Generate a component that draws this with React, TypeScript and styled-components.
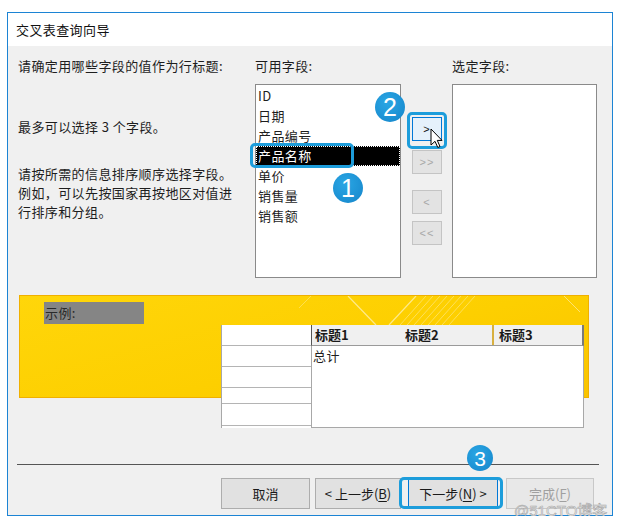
import React from 'react';
import styled, { createGlobalStyle } from 'styled-components';

const GlobalStyle = createGlobalStyle`
  html, body {
    margin: 0;
    padding: 0;
    background: #fff;
  }
  body {
    font-family: "Noto Sans CJK SC", "Microsoft YaHei", sans-serif;
    font-size: 13px;
    letter-spacing: 0.4px;
    color: #1e1e1e;
  }
`;

const fields = ['ID', '日期', '产品编号', '产品名称', '单价', '销售量', '销售额'];

const App = () => {
    return (
        <Page>
            <GlobalStyle />
            <Window>
                <TitleBar>交叉表查询向导</TitleBar>
                <Body>
                    <Upper>
                        <LeftCol>
                            <Line>请确定用哪些字段的值作为行标题:</Line>
                            <Line $mt={42}>最多可以选择 3 个字段。</Line>
                            <Line $mt={28}>
                                请按所需的信息排序顺序选择字段。<br />
                                例如，可以先按国家再按地区对值进<br />
                                行排序和分组。
                            </Line>
                        </LeftCol>
                        <FieldCol $w={146}>
                            <FieldLabel>可用字段:</FieldLabel>
                            <ListBox>
                                {fields.map((f) => (
                                    <ListItem key={f} $selected={f === '产品名称'}>{f}</ListItem>
                                ))}
                            </ListBox>
                        </FieldCol>
                        <ButtonCol>
                            <MoveButton $mt={0} $active>&gt;</MoveButton>
                            <MoveButton $mt={9}>&gt;&gt;</MoveButton>
                            <MoveButton $mt={16}>&lt;</MoveButton>
                            <MoveButton $mt={7}>&lt;&lt;</MoveButton>
                        </ButtonCol>
                        <FieldCol $w={145}>
                            <FieldLabel>选定字段:</FieldLabel>
                            <ListBox />
                        </FieldCol>
                    </Upper>

                    <Banner>
                        <BannerArt width="570" height="103" viewBox="0 0 570 103">
                            <line x1="328" y1="0" x2="356" y2="29" stroke="#fff" strokeOpacity="0.55" strokeWidth="1.2" />
                            <line x1="396" y1="0" x2="369" y2="29" stroke="#fff" strokeOpacity="0.55" strokeWidth="1.2" />
                            <line x1="291" y1="0" x2="279" y2="12" stroke="#fff" strokeOpacity="0.3" strokeWidth="1" />
                            {[0, 1, 2, 3, 4, 5, 6, 7].map((i) => (
                                <line key={i} x1={380 + i * 7} y1="29" x2={406 + i * 7} y2="0" stroke="#fff" strokeOpacity="0.35" strokeWidth="1" />
                            ))}
                            <line x1="544" y1="0" x2="560" y2="16" stroke="#fff" strokeOpacity="0.45" strokeWidth="1" />
                        </BannerArt>
                        <SampleLabel>示例:</SampleLabel>
                        <SampleTable>
                            <RowHeads>
                                <RowHead $h={21} />
                                <RowHead $h={21} />
                                <RowHead $h={21} />
                                <RowHead $h={16} />
                                <RowHead $h={22} />
                            </RowHeads>
                            <Grid>
                                <HeaderRow>
                                    <HeaderCell>标题1</HeaderCell>
                                    <HeaderCell>标题2</HeaderCell>
                                    <HeaderCell $divider>标题3</HeaderCell>
                                </HeaderRow>
                                <GridBody>总计</GridBody>
                            </Grid>
                        </SampleTable>
                    </Banner>

                    <Separator />

                    <ButtonRow>
                        <DialogButton $w={89} $ml={0}>取消</DialogButton>
                        <DialogButton $w={86} $ml={5}>&lt; 上一步(<u>B</u>)</DialogButton>
                        <DialogButton $w={90} $ml={7} $primary>下一步(<u>N</u>) &gt;</DialogButton>
                        <DialogButton $w={88} $ml={8} $disabled>完成(<u>F</u>)</DialogButton>
                    </ButtonRow>
                </Body>

                <Callout $x={242} $y={130} $w={104} $h={25} />
                <Badge $x={325} $y={160} $d={30}>1</Badge>
                <Badge $x={367} $y={79} $d={30}>2</Badge>
                <Callout $x={399} $y={99} $w={40} $h={37} />
                <Cursor width="13" height="21" viewBox="0 0 13 21">
                    <path d="M1 1 L1 17 L5 13.3 L7.8 19.5 L10 18.5 L7.3 12.4 L12 12.4 Z" fill="#fff" stroke="#000" strokeWidth="1" strokeLinejoin="round" />
                </Cursor>
                <Callout $x={391} $y={464} $w={104} $h={32} />
                <Badge $x={459} $y={432} $d={26}>3</Badge>
                <Watermark>@51CTO博客</Watermark>
            </Window>
        </Page>
    );
}

const Page = styled.div`
    padding: 12px 0 0 7px;
`;

const Window = styled.div`
    position: relative;
    box-sizing: border-box;
    width: 606px;
    height: 504px;
    border: 1px solid #1c84d4;
    background: #f0f0f0;
    display: flex;
    flex-direction: column;
`;

const TitleBar = styled.div`
    height: 33px;
    flex-shrink: 0;
    background: #fff;
    display: flex;
    align-items: center;
    padding-left: 8px;
    color: #111;
`;

const Body = styled.div`
    flex: 1;
    padding: 10px 0 0 10px;
`;

const Upper = styled.div`
    display: flex;
    align-items: flex-start;
`;

const LeftCol = styled.div`
    width: 237px;
    display: flex;
    flex-direction: column;
`;

const Line = styled.div<{ $mt?: number }>`
    line-height: 19px;
    margin-top: ${(p) => p.$mt || 0}px;
    white-space: nowrap;
`;

const FieldCol = styled.div<{ $w: number }>`
    width: ${(p) => p.$w}px;
    display: flex;
    flex-direction: column;
`;

const FieldLabel = styled.div`
    line-height: 19px;
    margin-bottom: 9px;
`;

const ListBox = styled.div`
    box-sizing: border-box;
    height: 194px;
    background: #fff;
    border: 1px solid #8a8a8a;
    padding-top: 1px;
`;

const ListItem = styled.div<{ $selected?: boolean }>`
    height: 20px;
    line-height: 20px;
    padding-left: 2px;
    color: ${(p) => (p.$selected ? '#fff' : '#1e1e1e')};
    background: ${(p) => (p.$selected ? '#000' : 'transparent')};
    outline: ${(p) => (p.$selected ? '1px dotted #fff' : 'none')};
    outline-offset: -1px;
`;

const ButtonCol = styled.div`
    width: 51px;
    box-sizing: border-box;
    padding: 61px 0 0 11px;
    display: flex;
    flex-direction: column;
`;

const MoveButton = styled.div<{ $mt: number; $active?: boolean }>`
    box-sizing: border-box;
    width: 30px;
    height: 24px;
    margin-top: ${(p) => p.$mt}px;
    display: flex;
    align-items: center;
    justify-content: center;
    font-family: "Liberation Sans", Arial, sans-serif;
    font-size: 11px;
    letter-spacing: 1px;
    color: ${(p) => (p.$active ? '#111' : '#a8a8a8')};
    background: ${(p) => (p.$active ? '#e5f1fb' : '#e3e3e3')};
    border: 1px solid ${(p) => (p.$active ? '#0078d7' : '#c4c4c4')};
`;

const Banner = styled.div`
    position: relative;
    box-sizing: border-box;
    width: 570px;
    height: 103px;
    margin: 17px 0 0 1px;
    padding: 6px 0 0 24px;
    background: linear-gradient(165deg, #ffd60a 0%, #fdcf00 55%, #f9c400 100%);
    border: 1px solid #f0b000;
`;

const BannerArt = styled.svg`
    position: absolute;
    left: 0;
    top: 0;
`;

const SampleLabel = styled.div`
    position: relative;
    width: 100px;
    height: 22px;
    line-height: 22px;
    padding-left: 1px;
    box-sizing: border-box;
    background: #858585;
    color: #2a2a2a;
`;

const SampleTable = styled.div`
    position: relative;
    display: flex;
    margin: 1px 0 0 177px;
`;

const RowHeads = styled.div`
    width: 89px;
    display: flex;
    flex-direction: column;
    border-left: 1px solid #a8a8a8;
    background: #fff;
`;

const RowHead = styled.div<{ $h: number }>`
    height: ${(p) => p.$h}px;
    box-sizing: border-box;
    border-bottom: 1px solid #b4b4b4;
`;

const Grid = styled.div`
    width: 273px;
    display: flex;
    flex-direction: column;
`;

const HeaderRow = styled.div`
    height: 21px;
    box-sizing: border-box;
    display: grid;
    grid-template-columns: 90px 90px 1fr;
    background: #f0f0f0;
    border-left: 1px solid #555;
    border-right: 2px solid #7a7a7a;
    border-bottom: 1px solid #9a9a9a;
`;

const HeaderCell = styled.div<{ $divider?: boolean }>`
    font-weight: bold;
    line-height: 20px;
    letter-spacing: 0;
    padding-left: ${(p) => (p.$divider ? 5 : 3)}px;
    border-left: ${(p) => (p.$divider ? '2px solid #d8b040' : 'none')};
    color: #1a1a1a;
`;

const GridBody = styled.div`
    height: 82px;
    box-sizing: border-box;
    background: #fff;
    border: 1px solid #a8a8a8;
    border-top: none;
    padding-left: 1px;
    line-height: 19px;
`;

const Separator = styled.div`
    width: 582px;
    margin: 66px 0 0 -1px;
    border-top: 1px solid #555;
`;

const ButtonRow = styled.div`
    display: flex;
    margin-top: 13px;
    padding-left: 203px;
`;

const DialogButton = styled.div<{ $w: number; $ml: number; $primary?: boolean; $disabled?: boolean }>`
    box-sizing: border-box;
    width: ${(p) => p.$w}px;
    height: 31px;
    margin-left: ${(p) => p.$ml}px;
    display: flex;
    align-items: center;
    justify-content: center;
    letter-spacing: 0;
    background: ${(p) => (p.$disabled ? '#e8e8e8' : '#e1e1e1')};
    border: 1px solid ${(p) => (p.$primary ? '#0078d7' : p.$disabled ? '#c8c8c8' : '#adadad')};
    color: ${(p) => (p.$disabled ? '#a0a0a0' : '#1a1a1a')};
    u {
        text-underline-offset: 2px;
    }
`;

const Callout = styled.div<{ $x: number; $y: number; $w: number; $h: number }>`
    position: absolute;
    left: ${(p) => p.$x}px;
    top: ${(p) => p.$y}px;
    width: ${(p) => p.$w}px;
    height: ${(p) => p.$h}px;
    box-sizing: border-box;
    border: 3px solid #1d9ddb;
    border-radius: 5px;
`;

const Badge = styled.div<{ $x: number; $y: number; $d: number }>`
    position: absolute;
    left: ${(p) => p.$x}px;
    top: ${(p) => p.$y}px;
    width: ${(p) => p.$d}px;
    height: ${(p) => p.$d}px;
    border-radius: 50%;
    background: radial-gradient(circle at 40% 35%, #2aa6e4 0%, #1b8fd2 70%, #167fc2 100%);
    color: #fff;
    font-family: "Liberation Sans", Arial, sans-serif;
    font-size: ${(p) => Math.round(p.$d * 0.82)}px;
    line-height: ${(p) => p.$d + 1}px;
    letter-spacing: 0;
    text-align: center;
`;

const Cursor = styled.svg`
    position: absolute;
    left: 422px;
    top: 115px;
`;

const Watermark = styled.div`
    position: absolute;
    left: 506px;
    top: 486px;
    font-family: "Liberation Sans", "Noto Sans CJK SC", sans-serif;
    font-size: 15px;
    letter-spacing: 0;
    color: #f2f2f2;
    white-space: nowrap;
    -webkit-text-stroke: 0.6px #a8a8a8;
`;

export default App;
